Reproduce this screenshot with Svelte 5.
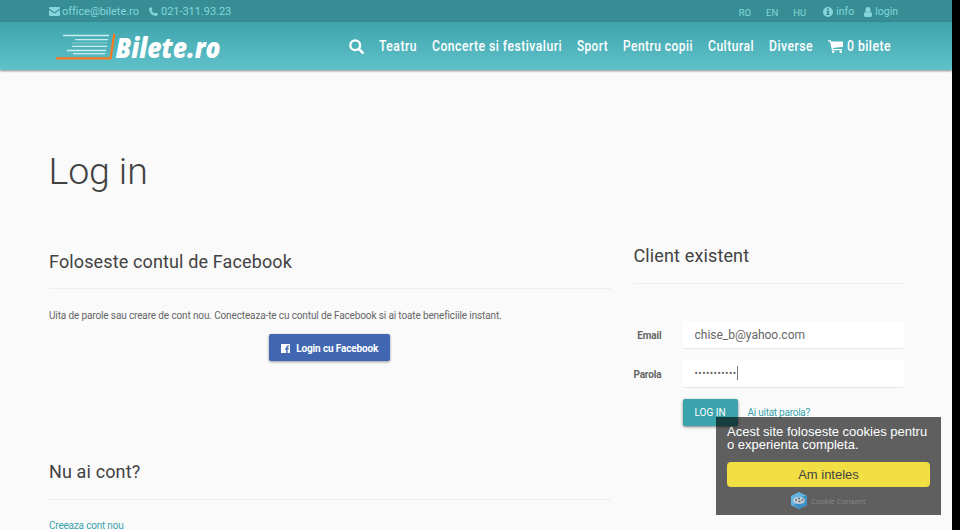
<script>
  const menu = [
    { label: 'Teatru', width: 38 },
    { label: 'Concerte si festivaluri', width: 130 },
    { label: 'Sport', width: 31 },
    { label: 'Pentru copii', width: 70 },
    { label: 'Cultural', width: 46 },
    { label: 'Diverse', width: 44 }
  ];
  let email = $state('chise_b@yahoo.com');
</script>

{#snippet navText(label, width)}
  <svg class="navtext" width={width + 2} height="24">
    <text x="0" y="16.5" textLength={width} lengthAdjust="spacingAndGlyphs">{label}</text>
  </svg>
{/snippet}

<div class="window">
  <div class="page">
    <div class="topbar">
      <div class="contact">
        <svg width="11" height="9" viewBox="0 0 11 9"><path d="M1 0h9q1 0 1 1v.6L5.5 5.3 0 1.6V1q0-1 1-1ZM0 2.9l5.5 3.7L11 2.9V8q0 1-1 1H1Q0 9 0 8Z"/></svg>
        <span class="office">office@bilete.ro</span>
        <svg class="phone" width="9" height="9" viewBox="0 0 9 9"><path d="M.2 1.2 1.8.1Q2.2 0 2.4.4l.9 1.7q.1.4-.2.7l-.6.6q1.100 2 3.100 3.100l.7-.7q.3-.3.6-.1l1.700.9q.4.200.3.600Q8.500 9 6.600 8.900 1.200 8.200.1 2.400 0 1.600.2 1.200Z"/></svg>
        <span class="tel">021-311.93.23</span>
      </div>
      <div class="langs"><span>RO</span><span>EN</span><span>HU</span></div>
      <div class="account">
        <svg width="10" height="10" viewBox="0 0 10 10"><path fill-rule="evenodd" d="M5 0a5 5 0 1 1 0 10A5 5 0 0 1 5 0ZM4 1.300v1.500h1.900V1.300ZM3.300 3.700v1h.8v2.400h-.8v1h3.500v-1H6V3.700Z"/></svg>
        <span class="info">info</span>
        <svg width="8" height="10" viewBox="0 0 8 10"><path d="M4 0a2.500 2.700 0 0 1 0 5.400A2.500 2.700 0 0 1 4 0ZM1.600 4.700q2.400 2 4.800 0Q8 5 8 8.300 8 10 6.600 10H1.400Q0 10 0 8.300 0 5 1.600 4.700Z"/></svg>
        <span>login</span>
      </div>
    </div>

    <header>
      <svg class="logo" width="170" height="34" viewBox="0 0 170 34">
        <g stroke="#c9eef0" stroke-width="1.300">
          <path d="M8 5.500h46"/><path d="M20 9.700h33"/><path d="M17 13h35" opacity=".3"/><path d="M17 16.400h35"/><path d="M12 20.500h39"/><path d="M18 23.700h32"/>
        </g>
        <path d="M1 28.300h54.500L59.300 4" fill="none" stroke="#f97a1c" stroke-width="2.200"/>
        <text x="60.500" y="27.500" textLength="105" lengthAdjust="spacingAndGlyphs">Bilete.ro</text>
      </svg>
      <nav>
        <svg class="search" width="15" height="15" viewBox="0 0 15 15"><circle cx="6.200" cy="6.200" r="4.900" fill="none" stroke="#fff" stroke-width="2.300"/><path d="m9.800 9.800 4 4" stroke="#fff" stroke-width="2.600" stroke-linecap="round"/></svg>
        {#each menu as item}
          <a href="#menu">{@render navText(item.label, item.width)}</a>
        {/each}
        <a href="#cart" class="cart">
          <svg width="15" height="13" viewBox="0 0 15 13"><path d="M0 .2h2.700l.5 1.400H15v5.200L5 8l.2 1H14v1.200H3.900L2 1.500H0Z"/><circle cx="5.200" cy="11.700" r="1.300"/><circle cx="12.700" cy="11.700" r="1.300"/></svg>
          {@render navText('0 bilete', 44)}
        </a>
      </nav>
    </header>

    <main>
      <h1>Log in</h1>
      <div class="columns">
        <section class="left">
          <h2 class="fbtitle">Foloseste contul de Facebook</h2>
          <p>Uita de parole sau creare de cont nou. Conecteaza-te cu contul de Facebook si ai toate beneficiile instant.</p>
          <button class="facebook">
            <svg width="9" height="9" viewBox="0 0 9 9"><path fill-rule="evenodd" d="M.5 0h8q.5 0 .5.500v8q0 .500-.500.500H6.600V5.500h1.300l.2-1.300H6.600v-.8q0-.7.7-.7h.8V1.500h-1.100Q5.200 1.500 5.200 3.200v1H4v1.300h1.200V9H.5Q0 9 0 8.500v-8Q0 0 .5 0Z"/></svg>
            <span>Login cu Facebook</span>
          </button>
          <h2 class="newtitle">Nu ai cont?</h2>
          <a class="create" href="#new">Creeaza cont nou</a>
        </section>
        <section class="right">
          <h2>Client existent</h2>
          <div class="row"><label for="email">Email</label><input id="email" bind:value={email} /></div>
          <div class="row"><label for="pass">Parola</label><div id="pass" class="field"><span class="dots">•••••••••••</span><i></i></div></div>
          <div class="actions"><button class="login">LOG IN</button><a href="#forgot">Ai uitat parola?</a></div>
        </section>
      </div>
    </main>

    <aside>
      <div class="notice"><span>Acest site foloseste cookies pentru</span><br /><span class="second">o experienta completa.</span></div>
      <button>Am inteles</button>
      <div class="consent">
        <svg width="16" height="17" viewBox="0 0 16 17"><path fill="#62b5e5" d="m8 0 8 4v9l-8 4-8-4V4Z"/><path fill="#3f8fc4" d="M16 4v9l-8 4-5-4 10-9Z"/><ellipse cx="8" cy="8.500" rx="6" ry="3.500" fill="#c3ced4"/><path d="M4 8h2m1-1.500h2M7.500 9.500h2m1-1.500h2" stroke="#59656c" stroke-width="1.400"/></svg>
        <span>Cookie Consent</span>
      </div>
    </aside>
  </div>
</div>

<style>
  :global(body) { margin: 0; overflow: hidden; }
  * { box-sizing: border-box; }
  a { color: #3aa3ac; text-decoration: none; }
  svg { display: block; flex: none; overflow: visible; }
  .window { width: 960px; height: 530px; background: #000; overflow: hidden; font-family: Roboto, sans-serif; font-size: 10px; color: #666; }
  .page { position: relative; width: 952px; height: 530px; background: #fafafa; overflow: hidden; }
  .topbar { height: 22px; display: flex; background: #368e94; color: #84d6dc; padding: 0 54px 0 49px; line-height: 23px; font-size: 11px; white-space: nowrap; }
  .topbar svg { fill: #84d6dc; }
  .contact, .account { display: flex; align-items: center; height: 23px; }
  .office { margin-left: 2px; width: 78px; letter-spacing: -.05px; }
  .phone { margin: 0 3px 0 9px; }
  .tel { letter-spacing: -.03px; }
  .langs { display: flex; gap: 15px; margin-left: auto; font-size: 9.500px; padding-top: 1px; }
  .account { margin-left: 17px; font-size: 10.500px; }
  .account span { margin-left: 3px; }
  .account .info { margin-right: 10px; }
  header { display: flex; align-items: flex-start; height: 48px; padding: 8px 59px 0 55px; background: linear-gradient(#3fa5ac, #60c1ca); box-shadow: 0 1px 2px rgba(0,0,0,.45); }
  .logo text { font: italic 800 29px "Open Sans", sans-serif; fill: #fff; }
  nav { display: flex; align-items: center; height: 32px; gap: 13px; margin-left: auto; }
  .search { margin-right: 2px; }
  .navtext text { font: 500 15.500px Roboto, sans-serif; letter-spacing: .6px; fill: #fff; }
  .cart { display: flex; align-items: center; gap: 4px; fill: #fff; }
  main { padding: 76px 48px 0 49px; }
  h1 { margin: 0 0 0 -.5px; font-size: 37.500px; line-height: 50px; font-weight: 300; color: #424242; letter-spacing: -.1px; }
  .columns { display: flex; gap: 23px; margin-top: 42px; }
  h2 { margin: 0; font-size: 18px; line-height: 26px; font-weight: 400; color: #424242; border-bottom: 1px solid #eee; letter-spacing: .13px; }
  .left { width: 561.500px; flex: none; display: flex; flex-direction: column; }
  .fbtitle { margin-top: 11px; height: 40px; }
  p { margin: 20px 0 0; line-height: 14px; white-space: nowrap; letter-spacing: -.13px; }
  button { font-family: inherit; border: 0; padding: 0; }
  .facebook { align-self: center; width: 121px; height: 27px; margin: 11px 1px 0 0; border-radius: 2px; background: #4267b2; color: #fff; font-size: 10px; letter-spacing: -.14px; font-weight: 700; display: flex; align-items: center; padding: 1px 0 0 12px; gap: 6.500px; box-shadow: 0 1px 3px rgba(0,0,0,.4); white-space: nowrap; }
  .facebook svg { fill: #fff; }
  .newtitle { margin-top: 98px; height: 41px; }
  .create { margin-top: 19px; line-height: 14px; letter-spacing: -.2px; }
  .right { width: 271px; flex: none; padding-top: 5px; }
  .right h2 { height: 41px; margin-bottom: 37px; }
  .row { display: flex; align-items: center; height: 28px; margin-bottom: 11px; }
  label { display: flex; flex: none; justify-content: flex-end; width: 49px; padding: 1px 21px 0 0; font-weight: 700; letter-spacing: -.13px; white-space: nowrap; }
  input, .field { width: 221.500px; height: 28px; border: 0; border-bottom: 1px solid #e6e6e6; border-radius: 2px; background: #fff; padding: 0 12px; font: 12px Roboto, sans-serif; color: #666; outline: none; }
  .field { display: flex; align-items: center; padding-bottom: 1px; }
  .dots { font-size: 10px; letter-spacing: .45px; }
  .field i { width: 1px; height: 14px; background: #777; }
  .actions { display: flex; align-items: center; margin-left: 49px; gap: 10px; letter-spacing: -.25px; }
  .login { width: 55px; height: 27px; background: #3aa3ac; color: #fff; font-size: 10px; border-radius: 2px; box-shadow: 0 1px 3px rgba(0,0,0,.5); }
  aside { position: absolute; left: 716px; top: 417px; width: 225px; height: 98px; padding: 8px 11px 0; background: rgba(0,0,0,.62); font-family: "Liberation Sans", sans-serif; color: #fff; }
  .notice { font-size: 13px; line-height: 13px; white-space: nowrap; }
  aside button { width: 203px; height: 25px; margin-top: 11px; border-radius: 4px; background: #f1df44; color: #444; font-size: 13px; display: block; }
  .consent { display: flex; align-items: center; margin: 5px 0 0 64px; gap: 4px; font: 7.500px "Open Sans", sans-serif; color: #888; white-space: nowrap; }
</style>
